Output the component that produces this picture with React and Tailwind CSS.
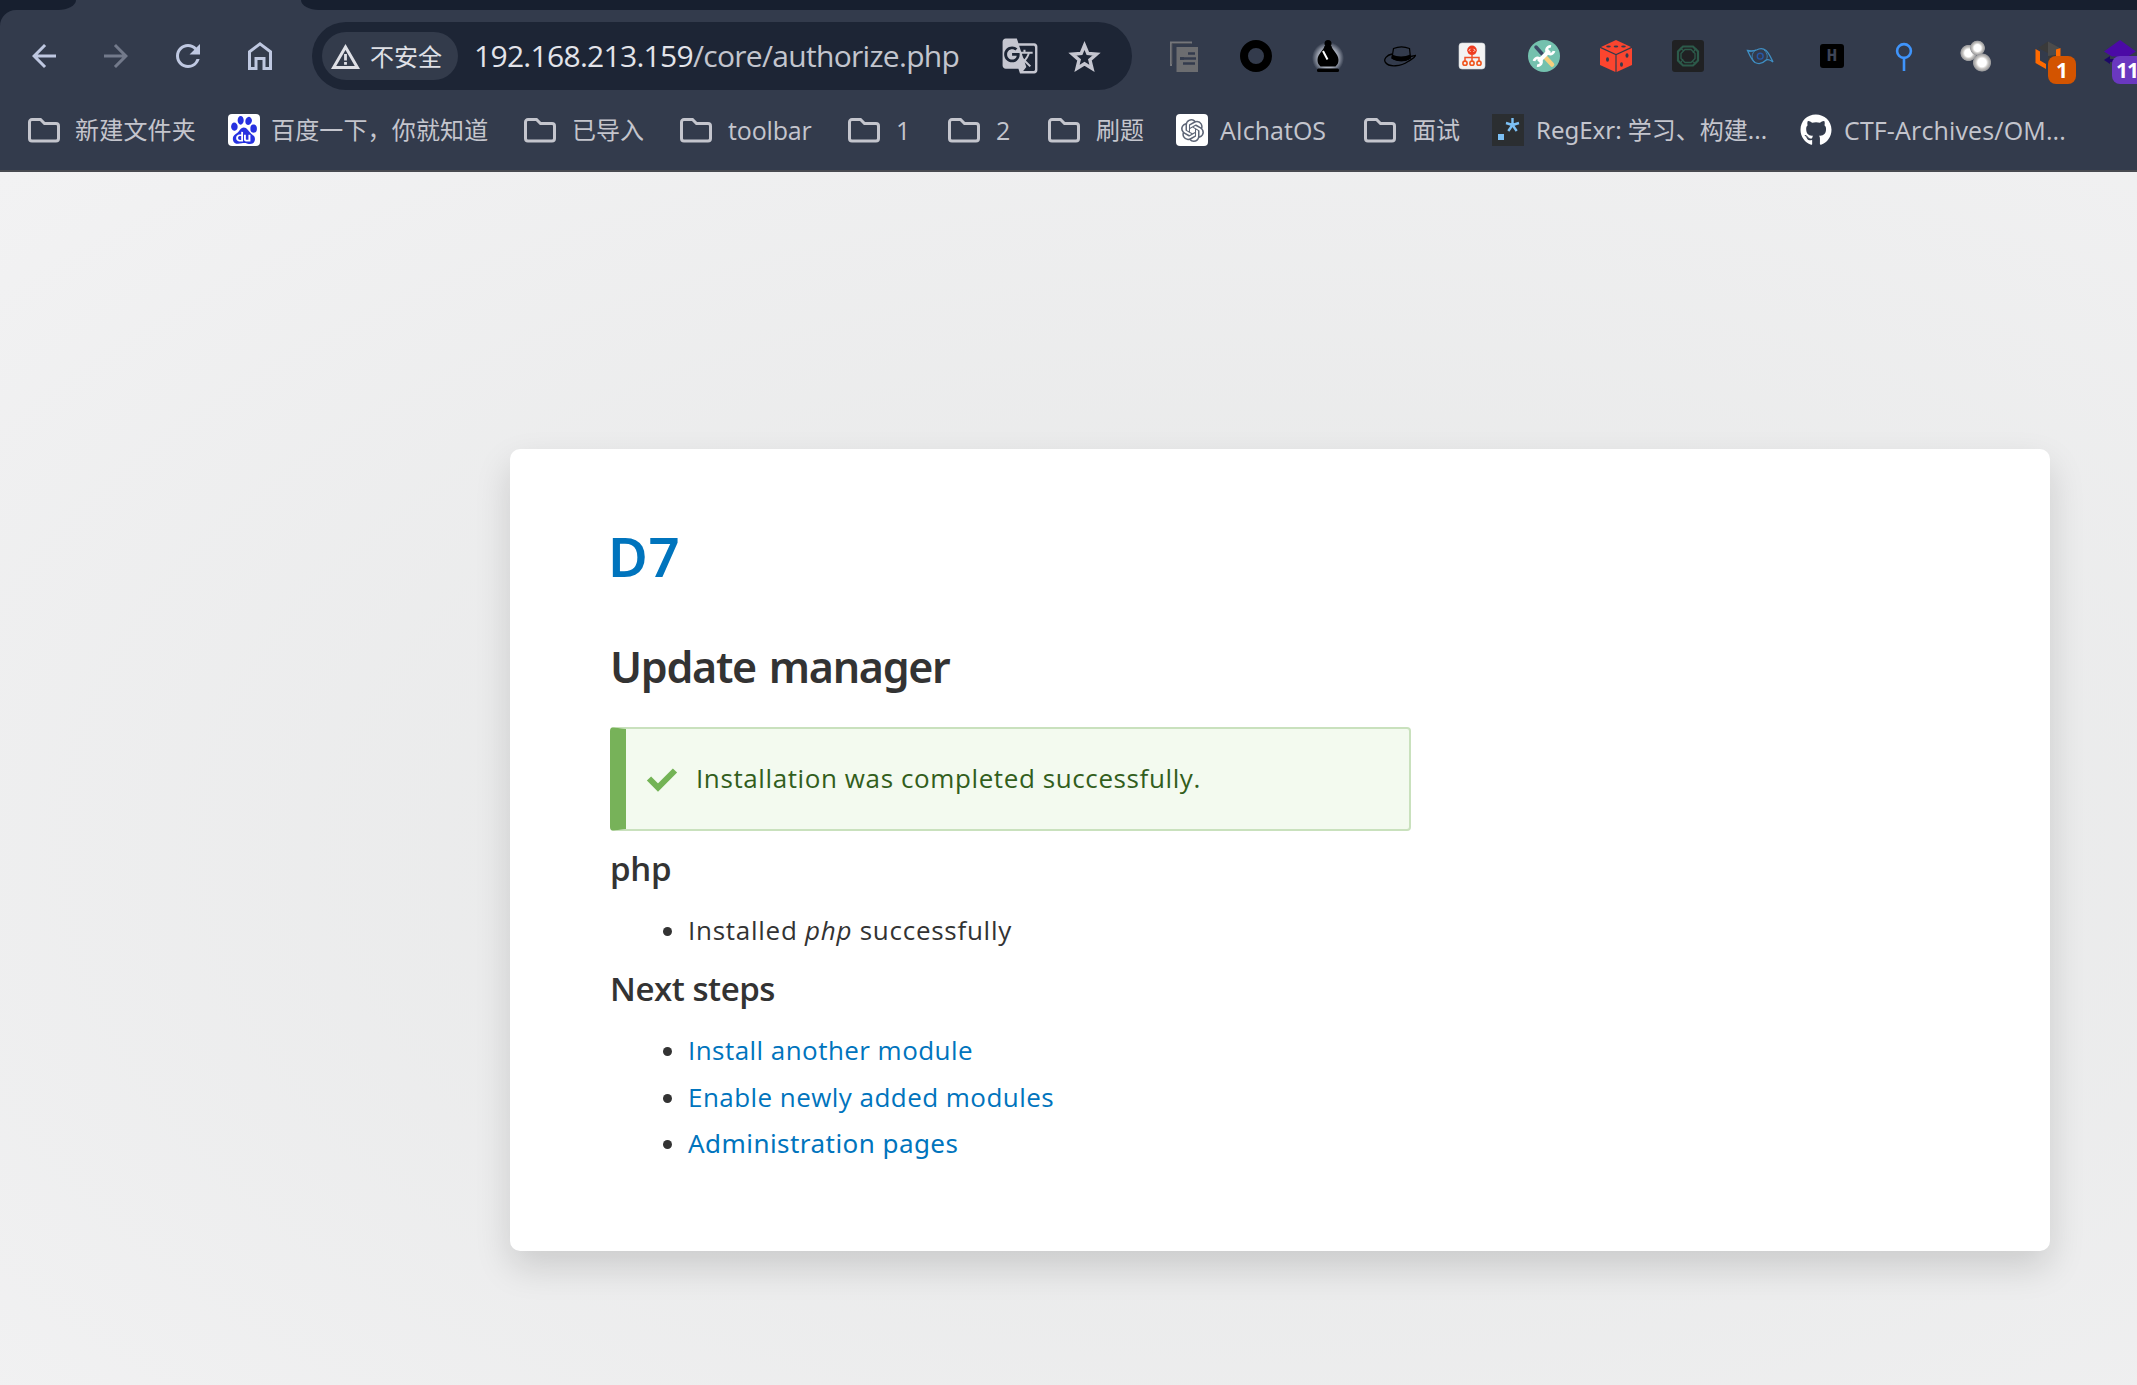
import { MdArrowBack, MdArrowForward, MdRefresh, MdGTranslate } from "react-icons/md";
import { SiBaidu, SiOpenai } from "react-icons/si";
import { FaGithub } from "react-icons/fa";

function HomeIcon() {
  return (
    <svg width="24" height="28" viewBox="0 0 24 28" fill="none" stroke="currentColor" strokeWidth="3">
      <path d="M1.5 26.5V9.8L12 1.9l10.500 7.900v16.700h-6.500v-10h-8v10z" />
    </svg>
  );
}

function WarningIcon() {
  return (
    <svg width="29" height="25" viewBox="0 0 29 25" fill="none">
      <path d="M2.600 23.500L14.500 3l11.900 20.500z" stroke="currentColor" strokeWidth="3" />
      <path d="M14.500 10v6.500M14.500 18v2.800" stroke="currentColor" strokeWidth="2.800" />
    </svg>
  );
}

function StarIcon() {
  return (
    <svg width="33" height="31" viewBox="0 0 33 31" fill="none">
      <path d="M16.500 4.500l3.300 8 8.700.700-6.600 5.700 2.100 8.500-7.500-4.600L9 27.400l2.100-8.500-6.600-5.700 8.700-.700z" stroke="currentColor" strokeWidth="3.400" />
    </svg>
  );
}

function FolderIcon() {
  return (
    <svg width="32" height="26" viewBox="0 0 32 26" fill="none">
      <path d="M4 2.500h8.500l4 4H28a2.500 2.500 0 0 1 2.500 2.500v12.500A2.500 2.500 0 0 1 28 24H4a2.500 2.500 0 0 1-2.500-2.500V5A2.500 2.500 0 0 1 4 2.500z" stroke="currentColor" strokeWidth="3" />
    </svg>
  );
}

const extSvg = { width: 32, height: 32, viewBox: "0 0 32 32", fill: "none" };

const extensions = [
  // Stacked documents
  <svg {...extSvg}>
    <path d="M3 26V2.500h21" stroke="#75767a" strokeWidth="2" />
    <path d="M4 24V3.500h19" stroke="#4e5159" strokeWidth="1" />
    <path d="M8.500 7h21.500v25H8.500z" fill="#6c6d70" />
    <path d="M20 13.500h7M12 18.500h16M15 23.500h12" stroke="#333b4d" strokeWidth="2.600" />
    <path d="M12 17.200h4v2.600h-4z" fill="#333b4d" />
  </svg>,
  // Ring
  <svg {...extSvg}>
    <circle cx="16" cy="16" r="12" stroke="#000" strokeWidth="8" />
  </svg>,
  // Chess bishop
  <svg {...extSvg}>
    <defs>
      <radialGradient id="glow">
        <stop offset="0.600" stopColor="#aab0bd" />
        <stop offset="1" stopColor="#aab0bd" stopOpacity="0" />
      </radialGradient>
    </defs>
    <circle cx="16" cy="18" r="16" fill="url(#glow)" />
    <circle cx="16" cy="3.500" r="3.500" fill="#000" />
    <path d="M12.500 6h7c.500 4 7 8 7 14 0 3-1 4.500-3 6.500h-15c-2-2-3-3.500-3-6.500 0-6 6.500-10 7-14z" fill="#000" />
    <path d="M11 11l4.500 8.500" stroke="#fff" strokeWidth="2" />
    <rect x="5" y="28.500" width="22" height="3.500" rx="1.500" fill="#000" />
  </svg>,
  // Fedora
  <svg {...extSvg}>
    <path d="M8 18l1.500-9.500c5-2 11-2 16 0l1 9.500c-5 3.500-13 3.500-18.500 0z" stroke="#000" strokeWidth="1.200" />
    <path d="M8 14.500c5 2.500 13 2.500 18.300 0l.400 4c-5 3.500-14 3.500-19.200 0z" fill="#000" />
    <path d="M8 14C3 15-1 19 1.500 22.500 5 27.500 17 26.500 24 21.500c4-2.500 7-3.500 7.500-6-1.500 0-3 1-4.700 1" stroke="#000" strokeWidth="1.300" />
  </svg>,
  // Site map tile
  <svg {...extSvg}>
    <rect x="3" y="3" width="26" height="26" rx="3" fill="#f3f3f3" stroke="#d4d6da" strokeWidth=".600" />
    <circle cx="16" cy="10.300" r="4.800" fill="#ef3b1f" />
    <path d="M14.500 8.800L13 10.300l1.500 1.500M17.500 8.800l1.500 1.500-1.500 1.500" stroke="#fff" strokeWidth=".900" />
    <path d="M16 15v6M9 21v-3.500h14V21" stroke="#f0512a" strokeWidth="1.500" />
    <g stroke="#f0561f" strokeWidth="1.600">
      <circle cx="9" cy="23.200" r="2.100" />
      <circle cx="16" cy="23.200" r="2.100" />
      <circle cx="23" cy="23.200" r="2.100" />
    </g>
  </svg>,
  // Wrench and screwdriver
  <svg {...extSvg}>
    <circle cx="16" cy="16" r="16" fill="#74c1ae" />
    <path d="M8 7l8 9" stroke="#3c4a66" strokeWidth="3.500" strokeLinecap="round" />
    <path d="M18 18l6 6.500" stroke="#f7cf7d" strokeWidth="4.500" strokeLinecap="round" />
    <path d="M10.500 21.500l11-11" stroke="#fff" strokeWidth="4" />
    <path d="M23 6.500a3.800 3.800 0 1 0 3 4.500M6 21a3.800 3.800 0 1 1 3 4.500" stroke="#fff" strokeWidth="2.800" />
  </svg>,
  // Die
  <svg {...extSvg}>
    <path d="M16 0l15 7-15 7L1 7z" fill="#fb452f" />
    <path d="M0 8l15.400 7V32L0 25z" fill="#fb452f" />
    <path d="M32 8l-15.400 7V32L32 25z" fill="#fb452f" />
    <g fill="#333b4d">
      <ellipse cx="8.500" cy="6.500" rx="2.300" ry="1.100" />
      <ellipse cx="16" cy="6.500" rx="2.300" ry="1.100" />
      <ellipse cx="23.500" cy="6.500" rx="2.300" ry="1.100" />
      <ellipse cx="7.500" cy="19.500" rx="1.500" ry="2.300" />
      <ellipse cx="27" cy="15.500" rx="1.500" ry="2.300" />
      <ellipse cx="21.500" cy="24.500" rx="1.500" ry="2.300" />
    </g>
  </svg>,
  // Green knot tile
  <svg {...extSvg}>
    <rect width="32" height="32" rx="3" fill="#202123" />
    <path d="M11 6.500h10l5 5v9l-5 5H11l-5-5v-9z" stroke="#2c5a4a" strokeWidth="2.200" />
    <path d="M13 9.500h6l4 4v5l-4 4h-6l-4-4v-5zM8 8l4 3M24 8l-3 5M24 24l-4-3M8 24l3-5" stroke="#2c5a4a" strokeWidth="1.300" />
  </svg>,
  // Eye outline
  <svg {...extSvg}>
    <g stroke="#3f8fc4" strokeWidth="1.300">
      <path d="M3.500 10.500c2 4 4 9.500 7.500 12 4 2 8 .500 10.500-2 2.500-2 5-.500 7.500 1.500-2-4-4-9-7-11.500-3.500-3-7-2-9.500-.500-3 1-6 1-9 .500z" />
      <path d="M3.500 10.500C7 13 10 10.500 12 10c-5 3-5 9-1 12.500M20 10c4 3.500 4 8 1.500 10.500" strokeWidth=".800" />
    </g>
    <circle cx="16.200" cy="16.200" r="2.900" stroke="#2758a8" strokeWidth="1.400" />
  </svg>,
  // Letter tile
  <span className="flex size-6 items-center justify-center rounded-[3px] bg-black font-['Liberation_Mono',monospace] text-[18px] font-bold leading-none text-[#3d4457]">
    H
  </span>,
  // Pin
  <svg {...extSvg}>
    <circle cx="16" cy="11" r="6.900" stroke="#3f94fb" strokeWidth="2.600" />
    <path d="M16 18v13" stroke="#3f94fb" strokeWidth="2.600" />
  </svg>,
  // Three glowing balls
  <svg {...extSvg}>
    <defs>
      <radialGradient id="ball">
        <stop offset="0.450" stopColor="#fff" />
        <stop offset="0.650" stopColor="#c9c7c4" />
        <stop offset="0.900" stopColor="#9c9c9e" />
        <stop offset="1" stopColor="#9c9c9e" stopOpacity="0" />
      </radialGradient>
    </defs>
    <circle cx="8.500" cy="13" r="8.500" fill="url(#ball)" />
    <circle cx="17.500" cy="8" r="7.800" fill="url(#ball)" />
    <circle cx="22" cy="22.500" r="9.500" fill="url(#ball)" />
  </svg>,
  // Orange cube with a counter
  <span className="relative size-8">
    <svg {...extSvg}>
      <path d="M16 1.500L27 7.500v9l-11 6V13L6 8z" fill="#3a3a3a" />
      <path d="M16 1.500L27 7.500v7L16 16z" fill="#4c4c4c" />
      <path d="M3.500 9l4.500 2.500v9l6 3.500v5L3.500 23zM24 9.500L28.500 8v8H24z" fill="#ff6a00" />
    </svg>
    <span className="absolute left-4 top-4 flex size-7 items-center justify-center rounded-lg bg-[#d35400] font-['Open_Sans',sans-serif] text-[21px] font-bold leading-none text-white">
      1
    </span>
  </span>,
  // Purple layers with a counter
  <span className="relative size-8">
    <svg {...extSvg}>
      <path d="M0 20l6-4v8zM2 19h12v3H4z" fill="#1d0867" />
      <path d="M16 0l16 11.500-8 5H8L0 11.500z" fill="#4b0aa6" />
    </svg>
    <span className="absolute left-2 top-4 flex h-7 w-9 items-center rounded-lg bg-[#6a38bf] pl-1 font-['Open_Sans',sans-serif] text-[21px] font-bold leading-none tracking-[-1px] text-white">
      11
    </span>
  </span>,
];

const folder = <FolderIcon />;

const bookmarks = [
  { icon: folder, label: "新建文件夹", box: "w-[200px] gap-[15px]", text: "text-2xl tracking-[0.200px]" },
  {
    icon: (
      <span className="flex size-8 items-center justify-center rounded bg-white">
        <SiBaidu className="size-[28px] text-[#2731e0]" />
      </span>
    ),
    label: "百度一下，你就知道",
    box: "w-[296px] gap-[11px]",
    text: "text-2xl tracking-[0.150px]",
  },
  { icon: folder, label: "已导入", box: "w-[156px] gap-4", text: "text-2xl" },
  { icon: folder, label: "toolbar", box: "w-[168px] gap-4", text: "text-[25px] tracking-[-0.150px]" },
  { icon: folder, label: "1", box: "w-[100px] gap-4", text: "text-[25px]" },
  { icon: folder, label: "2", box: "w-[100px] gap-4", text: "text-[25px]" },
  { icon: folder, label: "刷题", box: "w-[128px] gap-4", text: "text-2xl" },
  {
    icon: (
      <span className="flex size-8 items-center justify-center rounded bg-white">
        <SiOpenai className="size-[23px] text-[#5d6576]" />
      </span>
    ),
    label: "AIchatOS",
    box: "w-[188px] gap-3",
    text: "text-[25px]",
  },
  { icon: folder, label: "面试", box: "w-[128px] gap-4", text: "text-2xl" },
  {
    icon: (
      <svg {...extSvg}>
        <path d="M0 0h32v32H0z" fill="#2b2e31" />
        <path d="M6 20h6v6H6z" fill="#7cc0f5" />
        <path d="M20.500 4v7M20.500 11l-6.500-2M20.500 11l6.500-2M20.500 11l-4.200 6M20.500 11l4.200 6" stroke="#7cc0f5" strokeWidth="2.400" />
      </svg>
    ),
    label: "RegExr: 学习、构建...",
    box: "w-[308px] gap-3",
    text: "text-2xl font-['Noto_Sans','Noto_Sans_CJK_SC',sans-serif]",
  },
  {
    icon: <FaGithub className="size-8 text-white" />,
    label: "CTF-Archives/OM...",
    box: "w-[300px] gap-3",
    text: "text-[25px] tracking-[0.150px]",
  },
];

function NavButton({ children, dim }) {
  return (
    <span className={`flex w-[72px] shrink-0 items-center justify-center ${dim ? "text-[#737a8b]" : "text-[#bfc8e1]"}`}>
      {children}
    </span>
  );
}

function BrowserChrome() {
  return (
    <header className="h-[172px] shrink-0 border-b-2 border-[#484a50] bg-[#171f2f]">
      <div className="flex h-[10px] bg-[#333b4c]">
        <div className="w-[76px] rounded-br-[18px_10px] bg-[#171f2f]" />
        <div className="w-[225px]" />
        <div className="flex-1 rounded-bl-[18px_10px] bg-[#171f2f]" />
      </div>
      <div className="h-40 rounded-tl-2xl bg-[#333b4c] pt-3">
        <div className="flex h-[68px] items-center pl-2">
          <NavButton><MdArrowBack className="size-9" /></NavButton>
          <NavButton dim><MdArrowForward className="size-9" /></NavButton>
          <NavButton><MdRefresh className="size-9" /></NavButton>
          <NavButton><HomeIcon /></NavButton>
          <div className="ml-4 flex h-[68px] w-[820px] shrink-0 items-center rounded-full bg-[#1d2535] pl-[10px] pr-[31px]">
            <div className="flex h-12 w-[136px] items-center gap-[10px] rounded-full bg-[#333b4b] pl-[9px] text-[#dfe0e6]">
              <WarningIcon />
              <span className="whitespace-nowrap pt-0.5 text-2xl leading-none">不安全</span>
            </div>
            <div className="ml-4 flex-1 whitespace-nowrap text-[30px] leading-none tracking-[-0.700px] text-[#c3c5ce]">
              <span className="text-[#e3e4ea]">192.168.213.159</span>/core/authorize.php
            </div>
            <MdGTranslate className="mr-[29px] size-[38px] text-[#c5c6d0]" />
            <span className="text-[#c5c6d0]"><StarIcon /></span>
          </div>
          <div className="ml-4 flex min-w-0 flex-1 overflow-hidden">
            {extensions.map((icon, i) => (
              <span key={i} className="flex h-[68px] w-[72px] shrink-0 items-center justify-center">{icon}</span>
            ))}
          </div>
        </div>
        <nav className="flex h-20 items-center pl-7 text-[#c4c5cd]">
          {bookmarks.map((b) => (
            <div key={b.label} className={`flex shrink-0 items-center whitespace-nowrap ${b.box}`}>
              {b.icon}
              <span className={`leading-8 ${b.text}`}>{b.label}</span>
            </div>
          ))}
        </nav>
      </div>
    </header>
  );
}

export default function App() {
  return (
    <div className="flex h-[1385px] w-[2137px] flex-col overflow-hidden font-['Open_Sans','Noto_Sans_CJK_SC',sans-serif]">
      <BrowserChrome />
      <main className="flex-1 bg-[radial-gradient(1810px_960px_at_1280px_678px,#e5e6e6,#f2f2f3)] pl-[510px] pt-[277px]">
        <article className="h-[802px] w-[1540px] rounded-[10px] bg-white pl-[100px] pt-[77px] text-[26px] text-[#333] shadow-[0_16px_36px_rgba(0,0,0,0.14)]">
          <h1 className="-ml-[2px] font-['Noto_Sans',sans-serif] text-[54.5px] font-semibold leading-[60px] tracking-[0.500px] text-[#0074bd]">D7</h1>
          <h2 className="mt-14 font-['Noto_Sans',sans-serif] text-[43px] font-semibold leading-[50px] tracking-[-1.300px] [word-spacing:3px]">Update manager</h2>
          <div className="mt-[35px] flex h-[104px] w-[801px] items-center rounded border-2 border-l-16 border-[#c9e1bd] border-l-[#77b259] bg-[#f3faef] pl-5 text-[#325e1c]">
            <svg width="32" height="25" viewBox="0 0 32 25" fill="none">
              <path d="M3 11.500l9 9L29 3.500" stroke="#73b355" strokeWidth="6" />
            </svg>
            <p className="ml-[18px] pb-[2px] tracking-[0.600px]">Installation was completed successfully.</p>
          </div>
          <h3 className="mt-[18px] text-[33px] font-semibold leading-10 tracking-[-0.300px]">php</h3>
          <ul className="mt-[18px] list-disc pl-[78px] leading-[46px] tracking-[0.730px]">
            <li>Installed <em>php</em> successfully</li>
          </ul>
          <h3 className="mt-4 text-[33px] font-semibold leading-10 tracking-[-0.450px]">Next steps</h3>
          <ul className="mt-[18px] list-disc pl-[78px] leading-[46.700px] tracking-[0.450px]">
            <li><a className="text-[#0074bd]">Install another module</a></li>
            <li><a className="text-[#0074bd]">Enable newly added modules</a></li>
            <li className="font-['Noto_Sans',sans-serif]"><a className="text-[#0074bd]">Administration pages</a></li>
          </ul>
        </article>
      </main>
    </div>
  );
}
